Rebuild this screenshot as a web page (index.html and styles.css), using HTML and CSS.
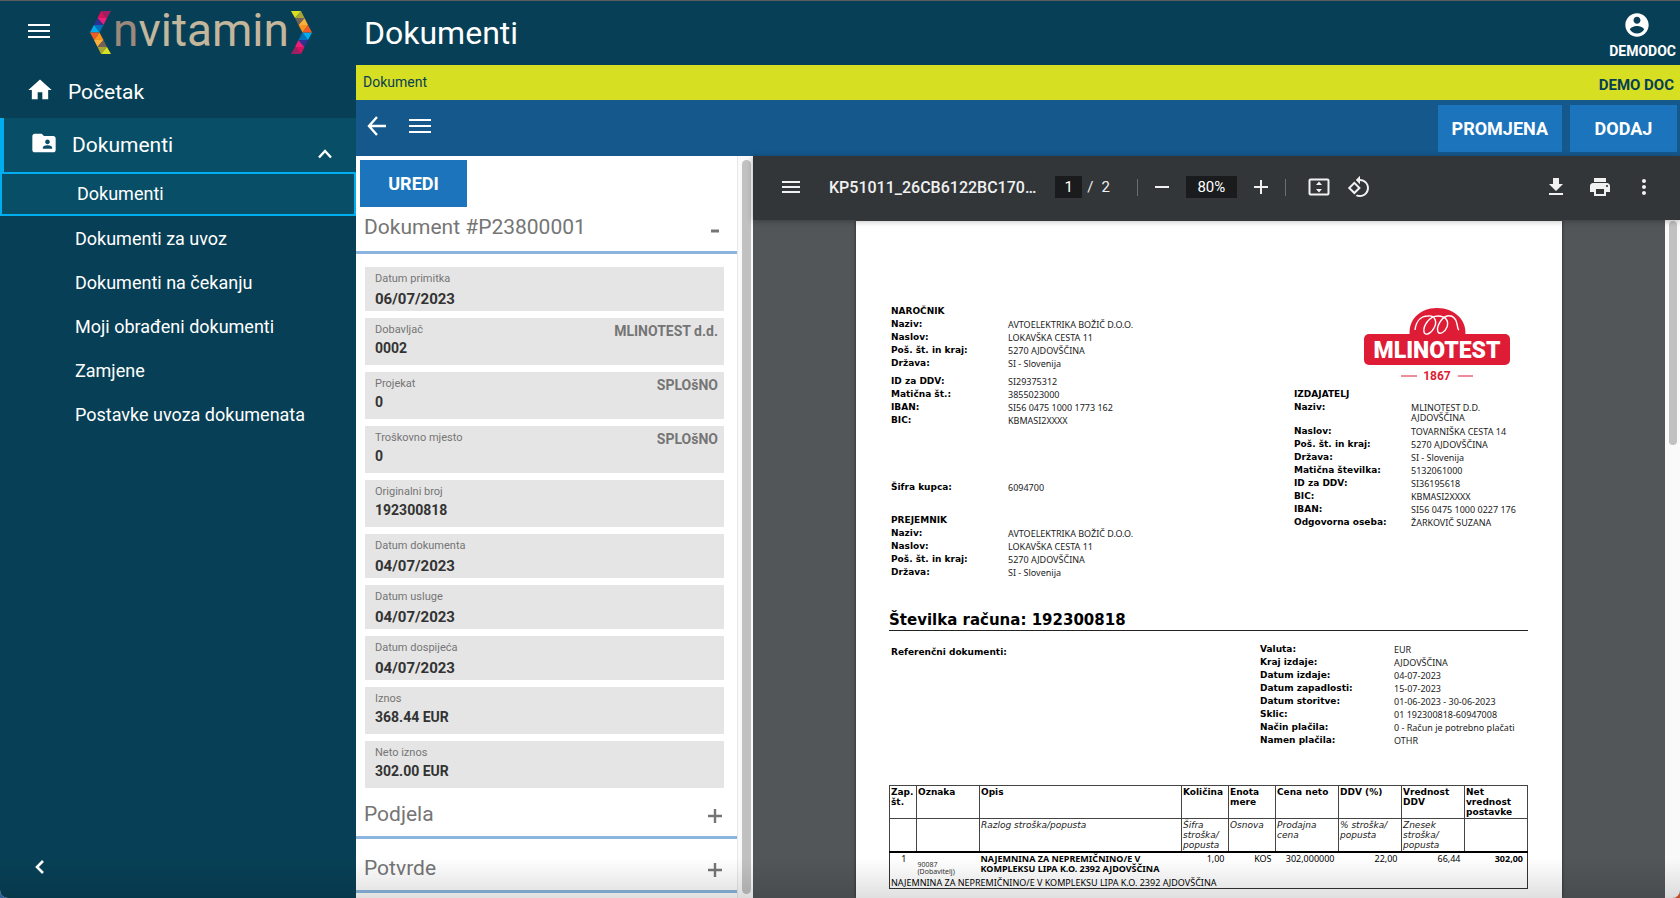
FILE: index.html
```html
<!DOCTYPE html>
<html lang="hr">
<head>
<meta charset="utf-8">
<title>Dokumenti</title>
<link rel="stylesheet" href="styles.css">
</head>
<body>
<div class="app">
  <aside class="sidebar">
    <div class="brand">
      <button class="icon-btn" aria-label="Izbornik"><svg width="22" height="14" viewBox="0 0 22 14"><path d="M0 1h22M0 7h22M0 13h22" stroke="#fff" stroke-width="2"/></svg></button>
      <a class="logo" href="#" aria-label="nvitamin">
        <svg class="bracket" width="21" height="43" viewBox="0 0 21 43">
          <path fill="#9e1f63" d="M11 0H21L17 7z"/><path fill="#d4145a" d="M11 0L17 7H7.500z"/>
          <path fill="#ed1e79" d="M7.500 7H17L13.500 14z"/><path fill="#2e3192" d="M7.500 7L13.500 14H4z"/>
          <path fill="#0071bc" d="M4 14H13.500L9.500 21.500z"/>
          <path fill="#00aeef" d="M4 14L9.500 21.500H0z"/><path fill="#f15a24" d="M0 21.500H9.500L4 29z"/>
          <path fill="#f7931e" d="M9.500 21.500L13.500 29H4z"/><path fill="#fbb03b" d="M4 29H13.500L7.500 36z"/>
          <path fill="#736357" d="M13.500 29L17 36H7.500z"/><path fill="#a8a632" d="M7.500 36H17L11 43z"/>
          <path fill="#d9e021" d="M17 36L21 43H11z"/>
        </svg>
        <span class="logo-text"><span class="logo-n">n</span>vitamin</span>
        <svg class="bracket bracket-right" width="21" height="43" viewBox="0 0 21 43">
          <path fill="#9e1f63" d="M11 0H21L17 7z"/><path fill="#d4145a" d="M11 0L17 7H7.500z"/>
          <path fill="#ed1e79" d="M7.500 7H17L13.500 14z"/><path fill="#2e3192" d="M7.500 7L13.500 14H4z"/>
          <path fill="#0071bc" d="M4 14H13.500L9.500 21.500z"/>
          <path fill="#00aeef" d="M4 14L9.500 21.500H0z"/><path fill="#f15a24" d="M0 21.500H9.500L4 29z"/>
          <path fill="#f7931e" d="M9.500 21.500L13.500 29H4z"/><path fill="#fbb03b" d="M4 29H13.500L7.500 36z"/>
          <path fill="#736357" d="M13.500 29L17 36H7.500z"/><path fill="#a8a632" d="M7.500 36H17L11 43z"/>
          <path fill="#d9e021" d="M17 36L21 43H11z"/>
        </svg>
      </a>
    </div>
    <nav class="nav">
      <a class="nav-main" href="#"><svg width="28" height="28" viewBox="0 0 24 24" fill="#fff"><path d="M10 20v-6h4v6h5v-8h3L12 3 2 12h3v8z"/></svg><span>Početak</span></a>
      <a class="nav-main nav-open" href="#"><svg width="28" height="28" viewBox="0 0 24 24" fill="#fff"><path d="M20 6h-8l-2-2H4c-1.100 0-1.990.9-1.990 2L2 18c0 1.100.9 2 2 2h16c1.100 0 2-.9 2-2V8c0-1.100-.9-2-2-2zm-5 3c1.100 0 2 .9 2 2s-.9 2-2 2-2-.9-2-2 .9-2 2-2zm4 8h-8v-1c0-1.330 2.670-2 4-2s4 .67 4 2v1z"/></svg><span>Dokumenti</span><svg class="chevron" width="14" height="10" viewBox="0 0 14 10"><path d="M1 8.500L7 2l6 6.500" fill="none" stroke="#fff" stroke-width="2.400"/></svg></a>
      <a class="nav-sub nav-current" href="#">Dokumenti</a>
      <a class="nav-sub" href="#">Dokumenti za uvoz</a>
      <a class="nav-sub" href="#">Dokumenti na čekanju</a>
      <a class="nav-sub" href="#">Moji obrađeni dokumenti</a>
      <a class="nav-sub" href="#">Zamjene</a>
      <a class="nav-sub" href="#">Postavke uvoza dokumenata</a>
    </nav>
    <button class="icon-btn collapse" aria-label="Sažmi"><svg width="10" height="14" viewBox="0 0 10 14"><path d="M8 1L2 7l6 6" fill="none" stroke="#fff" stroke-width="2.600"/></svg></button>
  </aside>

  <main class="main">
    <header class="topbar">
      <h1>Dokumenti</h1>
      <button class="user"><svg width="28" height="28" viewBox="0 0 24 24" fill="#fff"><path d="M12 2C6.480 2 2 6.480 2 12s4.480 10 10 10 10-4.480 10-10S17.520 2 12 2zm0 3c1.660 0 3 1.340 3 3s-1.340 3-3 3-3-1.340-3-3 1.340-3 3-3zm0 14.200c-2.500 0-4.710-1.280-6-3.220.03-1.990 4-3.080 6-3.080 1.990 0 5.970 1.090 6 3.080-1.290 1.940-3.500 3.220-6 3.220z"/></svg><span>DEMODOC</span></button>
    </header>
    <div class="crumbs"><span>Dokument</span><strong>DEMO DOC</strong></div>
    <div class="actions">
      <button class="icon-btn" aria-label="Natrag"><svg width="20" height="20" viewBox="0 0 20 20"><path d="M19 10H2M10 1L2 10l8 9" fill="none" stroke="#fff" stroke-width="2.400"/></svg></button>
      <button class="icon-btn" aria-label="Popis"><svg width="22" height="16" viewBox="0 0 22 16"><path d="M0 2h22M0 8h22M0 14h22" stroke="#fff" stroke-width="2"/></svg></button>
      <span class="spacer"></span>
      <button class="btn">PROMJENA</button>
      <button class="btn">DODAJ</button>
    </div>

    <div class="workspace">
      <section class="form-pane">
        <div class="form-scroll">
          <button class="btn edit">UREDI</button>
          <h2 class="section">Dokument #P23800001<button class="icon-btn" aria-label="Sakrij"><svg width="14" height="14" viewBox="0 0 14 14"><path d="M3 11h8" stroke="#757575" stroke-width="3"/></svg></button></h2>
          <div class="fields">
            <div class="field field-date"><label for="f1">Datum primitka</label><input id="f1" value="06/07/2023" readonly></div>
            <div class="field"><label for="f2">Dobavljač</label><input id="f2" value="0002" readonly><span class="note">MLINOTEST d.d.</span></div>
            <div class="field"><label for="f3">Projekat</label><input id="f3" value="0" readonly><span class="note">SPLOšNO</span></div>
            <div class="field"><label for="f4">Troškovno mjesto</label><input id="f4" value="0" readonly><span class="note">SPLOšNO</span></div>
            <div class="field"><label for="f5">Originalni broj</label><input id="f5" value="192300818" readonly></div>
            <div class="field field-date"><label for="f6">Datum dokumenta</label><input id="f6" value="04/07/2023" readonly></div>
            <div class="field field-date"><label for="f7">Datum usluge</label><input id="f7" value="04/07/2023" readonly></div>
            <div class="field field-date"><label for="f8">Datum dospijeća</label><input id="f8" value="04/07/2023" readonly></div>
            <div class="field"><label for="f9">Iznos</label><input id="f9" value="368.44 EUR" readonly></div>
            <div class="field"><label for="f10">Neto iznos</label><input id="f10" value="302.00 EUR" readonly></div>
          </div>
          <h2 class="section section-closed">Podjela<button class="icon-btn" aria-label="Prikaži podjelu"><svg width="14" height="14" viewBox="0 0 14 14"><path d="M0 7h14M7 0v14" stroke="#757575" stroke-width="2.400"/></svg></button></h2>
          <h2 class="section section-closed">Potvrde<button class="icon-btn" aria-label="Prikaži potvrde"><svg width="14" height="14" viewBox="0 0 14 14"><path d="M0 7h14M7 0v14" stroke="#757575" stroke-width="2.400"/></svg></button></h2>
        </div>
        <div class="track"><div class="thumb"></div></div>
      </section>

      <section class="viewer">
        <div class="pdf-bar">
          <button class="icon-btn" aria-label="Bočna traka"><svg width="24" height="24" viewBox="0 0 24 24" fill="#f1f1f1"><path d="M3 18h18v-2H3v2zm0-5h18v-2H3v2zm0-7v2h18V6H3z"/></svg></button>
          <span class="pdf-name">KP51011_26CB6122BC170…</span>
          <div class="pages"><input class="pdf-input page-no" value="1" aria-label="Stranica"><span>/</span><span>2</span></div>
          <i class="rule"></i>
          <button class="icon-btn" aria-label="Smanji"><svg width="24" height="24" viewBox="0 0 24 24" fill="#f1f1f1"><path d="M5 11h14v2H5z"/></svg></button>
          <input class="pdf-input zoom" value="80%" aria-label="Zum">
          <button class="icon-btn" aria-label="Povećaj"><svg width="24" height="24" viewBox="0 0 24 24" fill="#f1f1f1"><path d="M19 13h-6v6h-2v-6H5v-2h6V5h2v6h6v2z"/></svg></button>
          <i class="rule"></i>
          <button class="icon-btn fit" aria-label="Prilagodi"><svg width="24" height="24" viewBox="0 0 24 24" fill="#f1f1f1"><path d="M3.500 3.500h17a2 2 0 0 1 2 2v13a2 2 0 0 1-2 2h-17a2 2 0 0 1-2-2v-13a2 2 0 0 1 2-2zM3.500 5.500v13h17v-13zM12 6.500l3 3.500H9zM12 17.500L9 14h6z" fill-rule="evenodd"/></svg></button>
          <button class="icon-btn" aria-label="Zakreni"><svg width="24" height="24" viewBox="0 0 24 24" fill="#f1f1f1"><path d="M7.340 6.410L.86 12.900l6.490 6.480 6.490-6.480-6.500-6.490zM3.690 12.900l3.660-3.660L11 12.900l-3.660 3.660-3.650-3.660zm15.670-6.260C17.610 4.880 15.300 4 13 4V.76L8.760 5 13 9.240V6c1.790 0 3.580.68 4.950 2.050 2.730 2.730 2.730 7.170 0 9.900C16.580 19.320 14.790 20 13 20c-.97 0-1.940-.21-2.840-.61l-1.490 1.490C10.020 21.620 11.510 22 13 22c2.300 0 4.610-.88 6.360-2.640 3.520-3.510 3.520-9.210 0-12.720z"/></svg></button>
          <span class="spacer"></span>
          <div class="pdf-tools">
            <button class="icon-btn" aria-label="Preuzmi"><svg width="24" height="24" viewBox="0 0 24 24" fill="#f1f1f1"><path d="M19 9h-4V3H9v6H5l7 7 7-7zM5 18v2h14v-2H5z"/></svg></button>
            <button class="icon-btn" aria-label="Ispiši"><svg width="24" height="24" viewBox="0 0 24 24" fill="#f1f1f1"><path d="M19 8H5c-1.660 0-3 1.340-3 3v6h4v4h12v-4h4v-6c0-1.660-1.340-3-3-3zm-3 11H8v-5h8v5zm3-7c-.55 0-1-.45-1-1s.45-1 1-1 1 .45 1 1-.45 1-1 1zm-1-9H6v4h12V3z"/></svg></button>
            <button class="icon-btn" aria-label="Više"><svg width="24" height="24" viewBox="0 0 24 24" fill="#f1f1f1"><path d="M12 8c1.100 0 2-.9 2-2s-.9-2-2-2-2 .9-2 2 .9 2 2 2zm0 2c-1.100 0-2 .9-2 2s.9 2 2 2 2-.9 2-2-.9-2-2-2zm0 6c-1.100 0-2 .9-2 2s.9 2 2 2 2-.9 2-2-.9-2-2-2z"/></svg></button>
          </div>
        </div>
        <div class="pdf-body">
          <div class="canvas">
            <article class="paper">
              <div class="parties">
                <div class="buyer">
                  <h3>NAROČNIK</h3>
                  <dl><dt>Naziv:</dt><dd>AVTOELEKTRIKA BOŽIČ D.O.O.</dd><dt>Naslov:</dt><dd>LOKAVŠKA CESTA 11</dd><dt>Poš. št. in kraj:</dt><dd>5270 AJDOVŠČINA</dd><dt>Država:</dt><dd>SI - Slovenija</dd></dl>
                  <dl class="ids"><dt>ID za DDV:</dt><dd>SI29375312</dd><dt>Matična št.:</dt><dd>3855023000</dd><dt>IBAN:</dt><dd>SI56 0475 1000 1773 162</dd><dt>BIC:</dt><dd>KBMASI2XXXX</dd></dl>
                  <dl class="code"><dt>Šifra kupca:</dt><dd>6094700</dd></dl>
                  <h3>PREJEMNIK</h3>
                  <dl><dt>Naziv:</dt><dd>AVTOELEKTRIKA BOŽIČ D.O.O.</dd><dt>Naslov:</dt><dd>LOKAVŠKA CESTA 11</dd><dt>Poš. št. in kraj:</dt><dd>5270 AJDOVŠČINA</dd><dt>Država:</dt><dd>SI - Slovenija</dd></dl>
                </div>
                <div class="issuer">
                  <svg class="mill" width="146" height="76" viewBox="0 0 146 76" role="img" aria-label="MLINOTEST 1867">
                    <path fill="#de1c36" d="M46 30C43 14 55 1 73 1s31 13 28 29z"/>
                    <rect y="27" width="146" height="31" rx="5" fill="#de1c36"/>
                    <path d="M51 23C52 14 57 9 64 9c8-1 9 7 6 12-3 6-9 8-10 4-1-6 5-16 14-16 8 0 11 5 9 11-2 5-7 8-9 5-2-5 3-14 9-16 6-1 9 3 10 8 1 3 0 5 2 6" fill="none" stroke="#fff" stroke-width="1.400"/>
                    <text x="73" y="51" text-anchor="middle" class="mill-name">MLINOTEST</text>
                    <path d="M37 69h16M94 69h15" stroke="#de1c36"/>
                    <text x="73" y="73" text-anchor="middle" class="mill-year">1867</text>
                  </svg>
                  <h3>IZDAJATELJ</h3>
                  <dl><dt>Naziv:</dt><dd class="two">MLINOTEST D.D.<br>AJDOVŠČINA</dd><dt>Naslov:</dt><dd>TOVARNIŠKA CESTA 14</dd><dt>Poš. št. in kraj:</dt><dd>5270 AJDOVŠČINA</dd><dt>Država:</dt><dd>SI - Slovenija</dd><dt>Matična številka:</dt><dd>5132061000</dd><dt>ID za DDV:</dt><dd>SI36195618</dd><dt>BIC:</dt><dd>KBMASI2XXXX</dd><dt>IBAN:</dt><dd>SI56 0475 1000 0227 176</dd><dt>Odgovorna oseba:</dt><dd>ŽARKOVIČ SUZANA</dd></dl>
                </div>
              </div>
              <h2 class="invoice-no">Številka računa: 192300818</h2>
              <div class="terms">
                <h3>Referenčni dokumenti:</h3>
                <dl><dt>Valuta:</dt><dd>EUR</dd><dt>Kraj izdaje:</dt><dd>AJDOVŠČINA</dd><dt>Datum izdaje:</dt><dd>04-07-2023</dd><dt>Datum zapadlosti:</dt><dd>15-07-2023</dd><dt>Datum storitve:</dt><dd>01-06-2023 - 30-06-2023</dd><dt>Sklic:</dt><dd>01 192300818-60947008</dd><dt>Način plačila:</dt><dd>0 - Račun je potrebno plačati</dd><dt>Namen plačila:</dt><dd>OTHR</dd></dl>
              </div>
              <table class="items">
                <colgroup><col class="c-no"><col class="c-mid"><col><col class="c-qty"><col class="c-qty"><col class="c-mid"><col class="c-mid"><col class="c-mid"><col class="c-mid"></colgroup>
                <thead>
                  <tr><th>Zap. št.</th><th>Oznaka</th><th>Opis</th><th>Količina</th><th>Enota mere</th><th>Cena neto</th><th>DDV (%)</th><th>Vrednost DDV</th><th>Net vrednost postavke</th></tr>
                  <tr class="alt"><td></td><td></td><td>Razlog stroška/popusta</td><td>Šifra stroška/<br>popusta</td><td>Osnova</td><td>Prodajna cena</td><td>% stroška/<br>popusta</td><td>Znesek stroška/<br>popusta</td><td></td></tr>
                </thead>
                <tbody>
                  <tr class="line"><td class="mid">1</td><td class="tiny">90087<br>(Dobavitelj)</td><td><b>NAJEMNINA ZA NEPREMIČNINO/E V<br>KOMPLEKSU LIPA K.O. 2392 AJDOVŠČINA</b></td><td class="num">1,00</td><td class="num">KOS</td><td class="num">302,000000</td><td class="num">22,00</td><td class="num">66,44</td><td class="num"><b>302,00</b></td></tr>
                  <tr class="desc"><td colspan="9">NAJEMNINA ZA NEPREMIČNINO/E V KOMPLEKSU LIPA K.O. 2392 AJDOVŠČINA</td></tr>
                </tbody>
              </table>
            </article>
          </div>
          <div class="track"><div class="thumb thumb-short"></div></div>
        </div>
      </section>
    </div>
  </main>
  <div class="fade"></div>
</div>
</body>
</html>
```
FILE: styles.css
```css
* { box-sizing: border-box; }
body { margin: 0; background: linear-gradient(90deg, #2f5f96 50%, #c4502a 50%); font-family: Roboto, "Liberation Sans", sans-serif; }
h1, h2, h3, dl, dd { margin: 0; }
a { color: inherit; text-decoration: none; }
button, input { font-family: inherit; border: 0; padding: 0; margin: 0; }
svg { display: block; flex: none; }
.icon-btn { background: none; display: flex; flex: none; cursor: pointer; }
.spacer { flex: 1; }

.app { position: relative; display: flex; height: 100vh; overflow: hidden; border-top: 1px solid #5c5c5c; border-radius: 0 0 8px 8px; background: #fff; }
.fade { position: absolute; left: 0; right: 0; bottom: 0; height: 40px; background: linear-gradient(transparent, rgba(0, 0, 0, .12)); pointer-events: none; }

/* Sidebar */
.sidebar { flex: none; width: 356px; display: flex; flex-direction: column; background: #074056; color: #fff; }
.brand { display: flex; align-items: center; height: 64px; padding: 0 0 2px 28px; }
.brand .icon-btn { padding-bottom: 3px; }
.logo { display: flex; align-items: center; justify-content: space-between; width: 222px; margin-left: 40px; }
.bracket-right { transform: rotate(180deg); }
.logo-text { padding-bottom: 4px; font-size: 46px; line-height: 46px; color: #c4b69c; }
.logo-n { color: #9c887c; }
.nav { display: flex; flex-direction: column; flex: 1; }
.nav-main { display: flex; align-items: center; height: 53px; padding-left: 26px; font-size: 21px; }
.nav-main svg { margin-bottom: 4px; }
.nav-main span { margin-left: 14px; }
.nav-open { height: 54px; padding: 0 24px 0 26px; border-left: 4px solid #00aeef; background: #084e66; }
.nav-main .chevron { margin: 18px 0 0 auto; }
.nav-sub { height: 44px; padding-left: 75px; line-height: 44px; font-size: 18px; }
.nav-current { margin-bottom: 1px; line-height: 40px; border: 2px solid #00aeef; background: #084e66; }
.collapse { margin: 0 0 24px 35px; }

/* Header bars */
.main { flex: 1; min-width: 0; display: flex; flex-direction: column; }
.topbar { flex: none; display: flex; justify-content: space-between; align-items: center; height: 64px; padding: 0 4px 0 8px; background: #074056; color: #fff; }
h1 { font-size: 32px; font-weight: 400; }
.user { display: flex; flex-direction: column; align-items: center; gap: 4px; padding-top: 4px; background: none; color: #fff; font-size: 14px; line-height: 16px; font-weight: 700; }
.user svg { margin-right: 12px; }
.crumbs { flex: none; display: flex; justify-content: space-between; height: 35px; padding: 0 6px 0 7px; background: #d7df23; color: #074056; font-size: 14px; line-height: 34px; }
.crumbs strong { font-size: 15px; line-height: 40px; }
.actions { flex: none; display: flex; align-items: center; gap: 8px; height: 56px; padding: 0 3px 0 11px; background: #15588c; }
.actions .icon-btn { margin: 0 14px 4px 0; }
.btn { min-width: 107px; height: 47px; padding: 0 14px; background: #1c75bc; color: #fff; font-size: 18px; font-weight: 700; cursor: pointer; }

/* Document form */
.workspace { flex: 1; min-height: 0; display: flex; }
.form-pane { flex: none; width: 397px; display: flex; background: #fff; }
.form-scroll { flex: 1; overflow: hidden; padding-top: 4px; }
.edit { margin-left: 4px; }
.section { display: flex; align-items: center; justify-content: space-between; height: 47px; padding: 0 15px 4px 8px; border-bottom: 3px solid #8bb5de; color: #757575; font-size: 21px; font-weight: 400; }
.section-closed { height: 54px; padding-top: 10px; }
.section-closed .icon-btn { padding-top: 4px; }
.fields { display: flex; flex-direction: column; gap: 7px; padding: 13px 13px 0 9px; margin-bottom: -3px; }
.field { display: grid; grid-template-columns: 1fr auto; align-content: start; height: 47px; padding: 5px 6px 0 10px; background: #e5e5e5; }
.field label { font-size: 11px; line-height: 14px; color: #757575; }
.field input { grid-column: 1; width: 100%; height: 22px; background: none; color: #333; font-size: 14px; font-weight: 700; }
.field-date { height: 44px; }
.field-date input { height: 26px; font-size: 15px; }
.note { grid-column: 2; grid-row: 1 / 3; font-size: 14px; line-height: 16px; font-weight: 700; color: #757575; }
.track { flex: none; width: 16px; padding: 4px; background: #fafafa; border-left: 1px solid #e8e8e8; }
.thumb { height: 100%; width: 9px; border-radius: 5px; background: #c1c1c1; }

/* PDF viewer */
.viewer { flex: 1; min-width: 0; display: flex; flex-direction: column; background: #525659; }
.pdf-bar { position: relative; flex: none; display: flex; align-items: center; height: 64px; padding: 0 24px 2px 26px; background: #323639; color: #f1f1f1; box-shadow: 0 1px 6px rgba(0, 0, 0, .3); }
.pdf-name { margin: 0 19px 0 26px; font-size: 16px; font-weight: 500; }
.pages { display: flex; align-items: center; font-size: 15px; }
.pages span { margin-left: 5px; }
.pages span:last-child { margin-left: 8px; }
.pdf-input { height: 22px; background: #191b1c; color: #fff; text-align: center; font-size: 15px; }
.page-no { width: 27px; }
.zoom { width: 51px; margin: 0 12px; }
.rule { width: 1px; height: 17px; margin: 0 12px; background: #6b6e70; }
.pages + .rule { margin-left: 27px; }
.fit { margin: 0 16px 0 9px; }
.pdf-tools { display: flex; gap: 20px; }
.pdf-body { flex: 1; min-height: 0; display: flex; }
.pdf-body .track { padding: 1px 4px; border: 0; width: 15px; }
.thumb-short { height: 224px; width: 8px; }
.canvas { flex: 1; min-width: 0; padding: 1px 103px 0; overflow: hidden; }
.paper { min-height: 100%; padding: 84px 34px 0 33px; background: #fff; color: #000; font-family: "DejaVu Sans", sans-serif; font-size: 9px; line-height: 13px; box-shadow: 0 0 3px rgba(0, 0, 0, .6); }
.paper h3 { padding-left: 2px; font-size: 9px; line-height: 13px; }
.paper dl { display: grid; grid-template-columns: 117px 1fr; padding-left: 2px; }
.paper dt { font-weight: 700; }
.paper dd { font-family: "Noto Sans", sans-serif; color: #222; }
.parties { display: flex; justify-content: space-between; }
.issuer { width: 236px; }
.paper .ids { margin-top: 5px; }
.paper .code { margin: 54px 0 20px; }
.mill { margin: 2px 0 5px 72px; }
.mill-name { font: 900 23px Roboto, sans-serif; fill: #fff; }
.mill-year { font: 700 12px Roboto, sans-serif; fill: #de1c36; }
.paper .two { line-height: 10px; padding: 2px 0; }
.invoice-no { margin-top: 31px; border-bottom: 1px solid #222; font-size: 15px; line-height: 20px; }
.terms { display: flex; justify-content: space-between; padding-top: 12px; }
.terms h3 { padding-top: 3px; }
.terms dl { width: 270px; grid-template-columns: 134px 1fr; }
.items { width: 100%; margin-top: 38px; table-layout: fixed; border-collapse: collapse; line-height: 10px; border: 1px solid #333; }
.items th, .items td { padding: 1px 0 0 1px; vertical-align: top; text-align: left; }
.items thead th, .items thead td { height: 33px; border: 1px solid #444; }
.items .alt td { font-style: italic; border-bottom: 2px solid #000; color: #222; }
.c-no { width: 27px; }
.c-mid { width: 63px; }
.c-qty { width: 47px; }
.items tbody td { font-family: "Noto Sans", sans-serif; }
.items .line td { height: 25px; }
.items .line .tiny { padding-top: 8px; font-size: 7px; line-height: 7px; color: #333; }
.items .line .num { padding-right: 4px; text-align: right; }
.items .line .mid { text-align: center; }
.items .desc td { height: 12px; }
```
